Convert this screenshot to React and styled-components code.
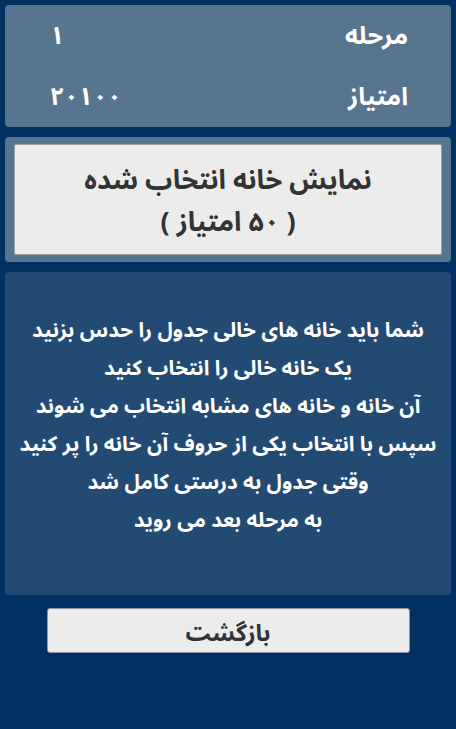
import React from 'react';
import styled, { createGlobalStyle } from 'styled-components';

const GlobalStyle = createGlobalStyle`
  html, body {
    margin: 0;
    padding: 0;
    background: #013062;
  }
  body {
    font-family: "Noto Sans", "Noto Sans Arabic", "DejaVu Sans", sans-serif;
  }
`;

const Page = styled.div`
  direction: rtl;
  min-height: 729px;
  padding: 5px 5px 0;
  box-sizing: border-box;
  display: flex;
  flex-direction: column;
  gap: 10px;
`;

const Panel = styled.div`
  background: ${(p) => p.$bg || '#587590'};
  border-radius: 4px;
  padding: ${(p) => p.$pad || '0'};
  height: ${(p) => p.$h || 'auto'};
  box-sizing: border-box;
`;

const StatRow = styled.div`
  display: flex;
  justify-content: space-between;
  align-items: center;
  height: 61px;
  padding: 0 43px 0 45px;
  color: #fff;
  font-size: 25px;
  font-weight: bold;
`;

const Number = styled.span`
  direction: ltr;
`;

const SelectButton = styled.button`
  display: flex;
  flex-direction: column;
  align-items: center;
  justify-content: center;
  gap: 4px;
  width: 100%;
  height: 111px;
  background: #ececec;
  border: 1px solid #9aa3ad;
  border-radius: 2px;
  color: #333;
  font-family: inherit;
  font-size: 27px;
  font-weight: bold;
  line-height: 38px;
  direction: rtl;
  padding: 0;
`;

const Help = styled.div`
  display: flex;
  flex-direction: column;
  align-items: center;
  padding-top: 38px;
  color: #fff;
  font-size: 20.75px;
  font-weight: bold;
  line-height: 38px;
  text-align: center;
  white-space: nowrap;
`;

const BackButton = styled.button`
  align-self: center;
  width: 363px;
  height: 45px;
  margin-top: 3px;
  background: #ececec;
  border: 1px solid #8d96a0;
  border-radius: 3px;
  color: #333;
  font-family: inherit;
  font-size: 23.5px;
  font-weight: bold;
  direction: rtl;
  padding: 0;
`;

const helpLines = [
  'شما باید خانه های خالی جدول را حدس بزنید',
  'یک خانه خالی را انتخاب کنید',
  'آن خانه و خانه های مشابه انتخاب می شوند',
  'سپس با انتخاب یکی از حروف آن خانه را پر کنید',
  'وقتی جدول به درستی کامل شد',
  'به مرحله بعد می روید',
];

export default function App() {
  return (
    <>
      <GlobalStyle />
      <Page>
        <Panel>
          <StatRow>
            <span>مرحله</span>
            <Number>۱</Number>
          </StatRow>
          <StatRow>
            <span>امتیاز</span>
            <Number>۲۰۱۰۰</Number>
          </StatRow>
        </Panel>
        <Panel $pad='7px 9px'>
          <SelectButton>
            <span>نمایش خانه انتخاب شده</span>
            <span>( ۵۰ امتیاز )</span>
          </SelectButton>
        </Panel>
        <Panel $bg='#234a73' $h='323px'>
          <Help>
            {helpLines.map((line) => (
              <div key={line}>{line}</div>
            ))}
          </Help>
        </Panel>
        <BackButton>بازگشت</BackButton>
      </Page>
    </>
  );
}
